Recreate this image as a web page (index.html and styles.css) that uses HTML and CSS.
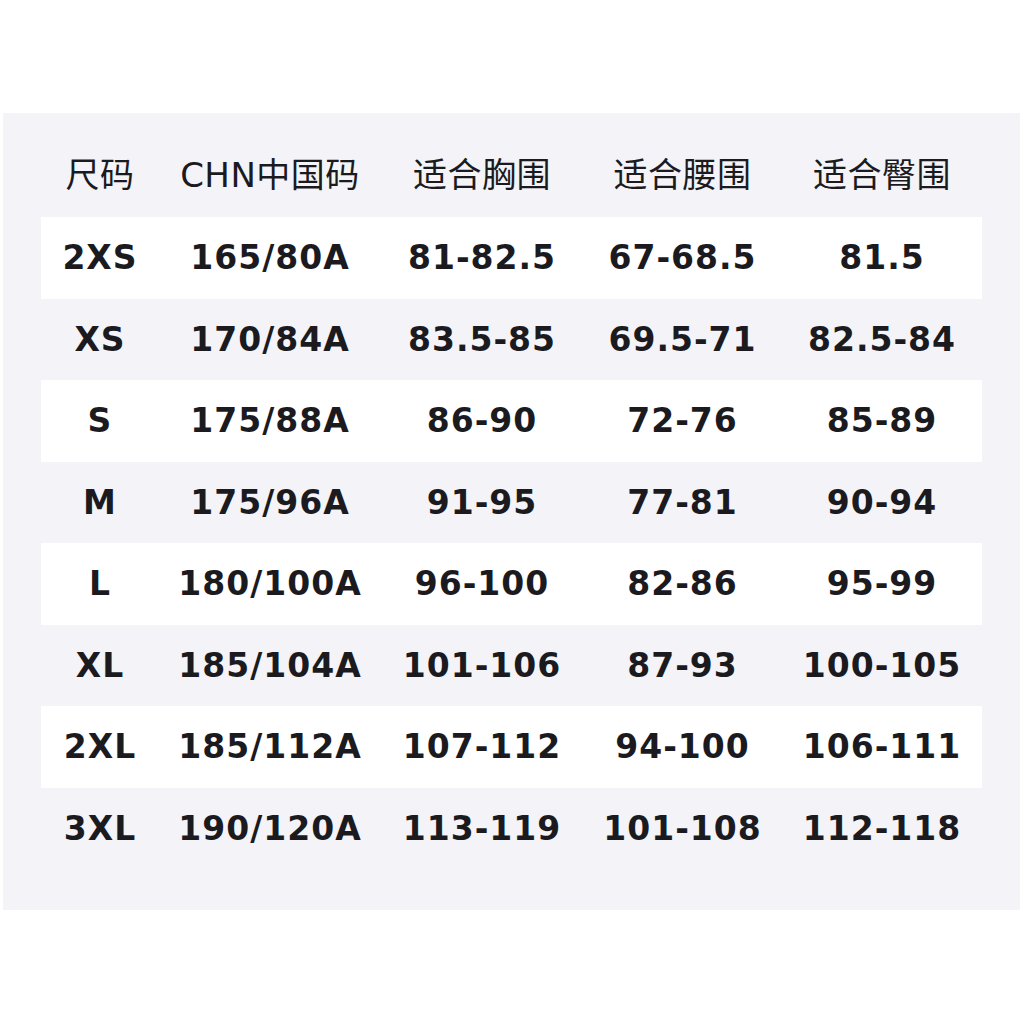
FILE: index.html
```html
<!DOCTYPE html>
<html lang="zh">
<head>
<meta charset="utf-8">
<link rel="stylesheet" href="styles.css">
</head>
<body>
<div class="page">
  <div class="panel">
    <div class="table">
      <div class="row head">
        <div class="cell">尺码</div>
        <div class="cell">CHN中国码</div>
        <div class="cell">适合胸围</div>
        <div class="cell">适合腰围</div>
        <div class="cell">适合臀围</div>
      </div>
      <div class="row light">
        <div class="cell">2XS</div><div class="cell">165/80A</div><div class="cell">81-82.5</div><div class="cell">67-68.5</div><div class="cell">81.5</div>
      </div>
      <div class="row">
        <div class="cell">XS</div><div class="cell">170/84A</div><div class="cell">83.5-85</div><div class="cell">69.5-71</div><div class="cell">82.5-84</div>
      </div>
      <div class="row light">
        <div class="cell">S</div><div class="cell">175/88A</div><div class="cell">86-90</div><div class="cell">72-76</div><div class="cell">85-89</div>
      </div>
      <div class="row">
        <div class="cell">M</div><div class="cell">175/96A</div><div class="cell">91-95</div><div class="cell">77-81</div><div class="cell">90-94</div>
      </div>
      <div class="row light">
        <div class="cell">L</div><div class="cell">180/100A</div><div class="cell">96-100</div><div class="cell">82-86</div><div class="cell">95-99</div>
      </div>
      <div class="row">
        <div class="cell">XL</div><div class="cell">185/104A</div><div class="cell">101-106</div><div class="cell">87-93</div><div class="cell">100-105</div>
      </div>
      <div class="row light">
        <div class="cell">2XL</div><div class="cell">185/112A</div><div class="cell">107-112</div><div class="cell">94-100</div><div class="cell">106-111</div>
      </div>
      <div class="row">
        <div class="cell">3XL</div><div class="cell">190/120A</div><div class="cell">113-119</div><div class="cell">101-108</div><div class="cell">112-118</div>
      </div>
    </div>
  </div>
</div>
</body>
</html>
```
FILE: styles.css
```css
html, body {
  margin: 0;
  padding: 0;
  background: #ffffff;
}
.page {
  padding-top: 113px;
  padding-left: 3px;
}
.panel {
  width: 1017px;
  height: 797px;
  box-sizing: border-box;
  padding: 0 38px;
  background: #f4f4f8;
}
.table {
  display: flex;
  flex-direction: column;
}
.row {
  display: grid;
  grid-template-columns: 118px 222px 202px 199px 200px;
  height: 81.5px;
  align-items: center;
  font-family: "DejaVu Sans", "Noto Sans CJK SC", sans-serif;
  font-weight: bold;
  font-size: 33px;
  letter-spacing: 1px;
  color: #1b1b1f;
}
.row.light {
  background: #ffffff;
}
.row.head {
  height: 104px;
  box-sizing: border-box;
  padding-top: 15px;
  font-weight: normal;
  font-size: 34px;
  letter-spacing: 0.5px;
  font-family: "DejaVu Sans", "Noto Sans CJK SC", sans-serif;
}
.cell {
  text-align: center;
  white-space: nowrap;
}
```
